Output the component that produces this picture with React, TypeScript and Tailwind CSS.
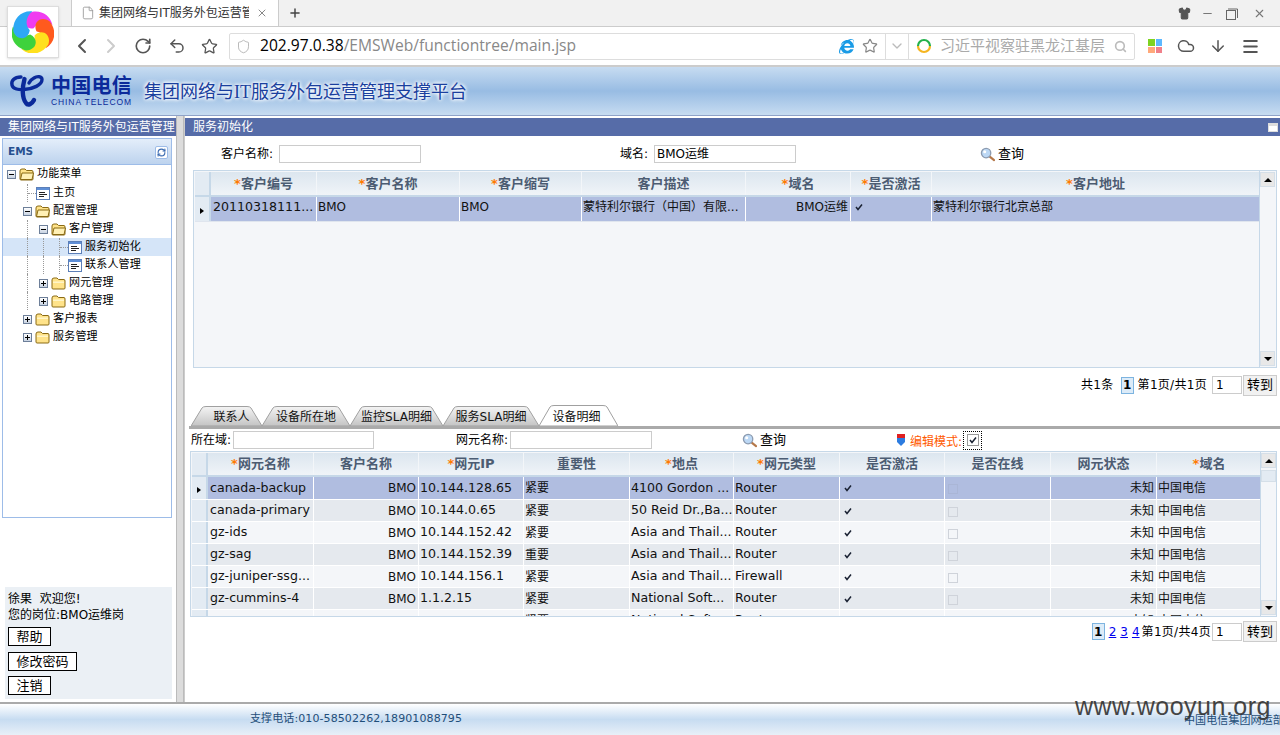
import type { ReactNode } from "react";
import { ArrowDown, ChevronDown, ChevronLeft, ChevronRight, Cloud, File, Menu, Minus, Plus, RefreshCw, RotateCw, Search, Shield, Shirt, Star, Undo2, X } from "lucide-react";
import { FaInternetExplorer } from "react-icons/fa";

const T1_COLS = [106, 143, 122, 164, 105, 81, 328];
const T2_COLS = [106, 105, 105, 106, 104, 106, 105, 106, 106, 105];

function Logo360() {
  const colors = ["#f03cf0", "#ff5a1e", "#ffe01e", "#3ed23c", "#2ea8f5"];
  return (
    <svg viewBox="0 0 100 100" className="h-[42px] w-[42px]">
      {colors.map((c, i) => (
        <path key={c} d="M54 42 C30 40 26 12 50 3 C78 0 100 18 99 46 C84 30 66 30 54 42Z" fill={c} transform={`rotate(${i * 72 - 15} 50 50)`} />
      ))}
      <circle cx="50" cy="50" r="7" fill="#fff" />
    </svg>
  );
}

function TelecomLogo() {
  return (
    <svg viewBox="0 0 36 34" className="h-[34px] w-[36px]" fill="none" stroke="#0b2a9a" strokeLinecap="round">
      <path d="M12 3 C5 3 2 7 3 11 C4 15 10 16 15 15.5 C24 15 33 11 33 5.5 C33 2 28 2 25 4 C23 5 21 7 20 9" strokeWidth="3.4" />
      <path d="M15.5 5 C13 14 13 24 17 29 C19 32 23 30 25 26" strokeWidth="4.4" />
    </svg>
  );
}

function QueryIcon() {
  return (
    <svg viewBox="0 0 16 16" className="h-[15px] w-[15px]">
      <path d="M10 10 L15 14" stroke="#b5784a" strokeWidth="2.4" strokeLinecap="round" />
      <circle cx="6.5" cy="6.5" r="5" fill="#bcd8f5" stroke="#8c9bb0" strokeWidth="1.4" />
      <circle cx="5" cy="5" r="1.6" fill="#fff" />
    </svg>
  );
}

function FolderIcon({ open }: { open?: boolean }) {
  return (
    <svg viewBox="0 0 15 13" className="h-[13px] w-[15px] shrink-0">
      <path d="M1 3 Q1 1 3 1 H6 L7.5 2.5 H13 Q14 2.5 14 4 V11 Q14 12 13 12 H2 Q1 12 1 11Z" fill="#ffe38a" stroke="#8a6a14" />
      {open ? <path d="M1.5 11.5 L3 5 H14.5 L13 11.5Z" fill="#fff0b5" stroke="#8a6a14" /> : <path d="M2 4.5 H13 V6 H2Z" fill="#fff5c8" />}
    </svg>
  );
}

function DocIcon() {
  return (
    <svg viewBox="0 0 14 13" className="ml-[1px] h-[13px] w-[14px] shrink-0">
      <rect x="0.5" y="0.5" width="13" height="12" fill="#fff" stroke="#5c7fb8" />
      <rect x="1" y="1" width="12" height="2" fill="#5f8fd6" />
      <path d="M3 5.5 H9 M3 7.5 H11 M3 9.5 H8" stroke="#222" />
    </svg>
  );
}

function TinyCheck({ className = "" }: { className?: string }) {
  return (
    <svg viewBox="0 0 8 8" className={`h-[8px] w-[8px] ${className}`}>
      <path d="M1 4 L3 6.5 L7 1.5" fill="none" stroke="#1a2233" strokeWidth="1.5" />
    </svg>
  );
}

function Toggle({ open }: { open: boolean }) {
  return (
    <span className="flex h-[9px] w-[9px] items-center justify-center border border-[#6d7f99] bg-gradient-to-b from-white to-[#c8d3e2]">
      <span className="relative block h-[1px] w-[5px] bg-black">
        {!open && <span className="absolute left-[2px] top-[-2px] h-[5px] w-[1px] bg-black" />}
      </span>
    </span>
  );
}

type TreeRow = {
  label: string;
  guides: boolean[];
  kind: "folder" | "leaf";
  open?: boolean;
  selected?: boolean;
};

const TREE: TreeRow[] = [
  { label: "功能菜单", guides: [], kind: "folder", open: true },
  { label: "主页", guides: [false], kind: "leaf" },
  { label: "配置管理", guides: [false], kind: "folder", open: true },
  { label: "客户管理", guides: [false, true], kind: "folder", open: true },
  { label: "服务初始化", guides: [false, true, true], kind: "leaf", selected: true },
  { label: "联系人管理", guides: [false, true, true], kind: "leaf" },
  { label: "网元管理", guides: [false, true], kind: "folder" },
  { label: "电路管理", guides: [false, true], kind: "folder" },
  { label: "客户报表", guides: [false], kind: "folder" },
  { label: "服务管理", guides: [false], kind: "folder" },
];

function Tree() {
  return (
    <div className="flex flex-col text-[11px] tracking-[0.2px] text-black">
      {TREE.map((r, i) => (
        <div key={r.label} className={`flex h-[18px] items-center ${i === 0 ? "mb-[1px]" : ""} ${r.selected ? "bg-[#d5e5f8]" : ""}`}>
          {r.guides.map((g, k) => (
            <span key={k} className="h-full w-4 shrink-0">
              {g && <span className="ml-2 block h-full border-l border-dotted border-[#999]" />}
            </span>
          ))}
          {r.kind === "folder" ? (
            <span className="flex h-full w-4 shrink-0 items-center justify-center">
              <Toggle open={!!r.open} />
            </span>
          ) : (
            <span className="ml-0 flex h-full w-4 shrink-0 items-center">
              <span className="ml-2 flex h-full items-center border-l border-dotted border-[#999]">
                <span className="block w-2 border-t border-dotted border-[#999]" />
              </span>
            </span>
          )}
          {r.kind === "folder" ? <FolderIcon open={r.open} /> : <DocIcon />}
          <span className="ml-[3px] whitespace-nowrap">{r.label}</span>
        </div>
      ))}
    </div>
  );
}

function HeadCell({ w, star, label }: { w: number; star?: boolean; label: string }) {
  return (
    <div style={{ width: w }} className="flex h-full shrink-0 items-center justify-center border-r border-[#f3f6f9] text-[13px] font-bold text-[#4c5c72]">
      {star && <span className="text-[#ff7a00]">*</span>}
      {label}
    </div>
  );
}

function BodyCell({ w, children, right, latin, className = "" }: { w: number; children?: ReactNode; right?: boolean; latin?: boolean; className?: string }) {
  return (
    <div
      style={{ width: w }}
      className={`flex h-full shrink-0 items-center overflow-hidden whitespace-nowrap border-r border-white px-[1px] leading-none text-[#111] ${latin ? "text-[12.6px]" : "text-[12px]"} ${right ? "justify-end pr-[2px]" : ""} ${className}`}
    >
      {children}
    </div>
  );
}

function Marker({ selected }: { selected?: boolean }) {
  return (
    <div className="flex h-full w-[16px] shrink-0 items-center justify-center border-r-2 border-[#c6d8e8] bg-[#e3ebf3]">
      {selected && <span className="mt-[3px] h-0 w-0 border-y-[3px] border-l-[4px] border-y-transparent border-l-black" />}
    </div>
  );
}

function ScrollBtn({ up }: { up?: boolean }) {
  return (
    <div className="flex h-[15px] w-[15px] items-center justify-center border border-[#d5dfe8] bg-[#e8e8e8]">
      <span className={`h-0 w-0 border-x-[4px] border-x-transparent ${up ? "border-b-[4px] border-b-black" : "border-t-[4px] border-t-black"}`} />
    </div>
  );
}

function TextInput({ value, w }: { value?: string; w: string }) {
  return <div className={`flex h-[18px] items-center border border-[#ccc] bg-white px-[2px] text-[12px] ${w}`}>{value}</div>;
}

function Query() {
  return (
    <span className="flex items-center gap-[3px] text-[13px]">
      <QueryIcon />
      <span>查询</span>
    </span>
  );
}

function PagerGo() {
  return (
    <>
      <div className="ml-[1px] flex h-[18px] w-[30px] items-center border border-[#ccc] bg-white px-[3px] text-[12px]">1</div>
      <div className="ml-[1px] flex h-[21px] w-[34px] items-center justify-center border border-[#ccc] bg-[#f1f1f1] text-[13px]">转到</div>
    </>
  );
}

function PageNo() {
  return <span className="flex h-[17px] w-[13px] items-center justify-center border border-[#7db4e0] bg-[#dcebf8] text-[12px] font-bold">1</span>;
}

function TabItem({ label, w, active, className = "" }: { label: string; w: number; active?: boolean; className?: string }) {
  const h = active ? 21 : 20;
  return (
    <div style={{ width: w, height: h }} className={`relative flex shrink-0 items-center justify-center text-[12px] text-[#111] ${className}`}>
      <svg viewBox={`0 0 ${w} ${h}`} preserveAspectRatio="none" className="absolute inset-0 h-full w-full">
        <defs>
          <linearGradient id="tabbg" x1="0" y1="0" x2="0" y2="1">
            <stop offset="0" stopColor="#f4f4f4" />
            <stop offset="1" stopColor="#c4c4c4" />
          </linearGradient>
        </defs>
        <path
          d={`M0 ${h} L11 2 Q12 0.5 15 0.5 H${w - 15} Q${w - 12} 0.5 ${w - 11} 2 L${w} ${h}Z`}
          fill={active ? "#fff" : "url(#tabbg)"}
          stroke="#a0a0a0"
          strokeWidth="1"
        />
      </svg>
      <span className="relative">{label}</span>
    </div>
  );
}

const T2_HEAD: [string, boolean][] = [
  ["网元名称", true], ["客户名称", false], ["网元IP", true], ["重要性", false], ["地点", true],
  ["网元类型", true], ["是否激活", false], ["是否在线", false], ["网元状态", false], ["域名", true],
];

const T2_ROWS = [
  ["canada-backup", "10.144.128.65", "紧要", "4100 Gordon ...", "Router"],
  ["canada-primary", "10.144.0.65", "紧要", "50 Reid Dr.,Ba...", "Router"],
  ["gz-ids", "10.144.152.42", "紧要", "Asia and Thail...", "Router"],
  ["gz-sag", "10.144.152.39", "重要", "Asia and Thail...", "Router"],
  ["gz-juniper-ssg...", "10.144.156.1", "紧要", "Asia and Thail...", "Firewall"],
  ["gz-cummins-4", "1.1.2.15", "紧要", "National Soft...", "Router"],
  ["", "", "紧要", "National Soft...", "Router"],
];

function DeviceTable() {
  return (
    <div className="ml-[5px] flex h-[166px] w-[1087px] border border-[#c6d8e8] bg-[#f4f6f9]">
      <div className="flex min-w-0 flex-1 flex-col overflow-hidden pl-[1px] pt-[1px]">
        <div className="flex h-[24px] shrink-0 border-b-2 border-[#c6d8e8] bg-gradient-to-b from-[#dce6ef] to-[#f0f4f8]">
          <Marker />
          {T2_HEAD.map(([label, star], i) => (
            <HeadCell key={label} w={T2_COLS[i]} star={star} label={label} />
          ))}
        </div>
        {T2_ROWS.map((r, i) => {
          const bg = i === 0 ? "bg-[#b0bde0]" : i % 2 === 1 ? "bg-[#e5e9ee]" : "bg-[#f4f6f9]";
          return (
            <div key={i} className={`flex shrink-0 border-b border-white ${i === 0 ? "h-[23px]" : "h-[22px]"} ${bg}`}>
              <Marker selected={i === 0} />
              <BodyCell w={T2_COLS[0]} latin className="pl-[2px]">
                {r[0] || <span className="-mt-[10px] ml-[60px]">...</span>}
              </BodyCell>
              <BodyCell w={T2_COLS[1]} right>BMO</BodyCell>
              <BodyCell w={T2_COLS[2]} latin>{r[1]}</BodyCell>
              <BodyCell w={T2_COLS[3]}>{r[2]}</BodyCell>
              <BodyCell w={T2_COLS[4]} latin>{r[3]}</BodyCell>
              <BodyCell w={T2_COLS[5]} latin>{r[4]}</BodyCell>
              <BodyCell w={T2_COLS[6]}><TinyCheck className="ml-[3px]" /></BodyCell>
              <BodyCell w={T2_COLS[7]}>
                <span className={`ml-[2px] mt-[2px] block h-[10px] w-[10px] border ${i === 0 ? "border-[#aab6d6]" : "border-[#cfd3da]"}`} />
              </BodyCell>
              <BodyCell w={T2_COLS[8]} right>未知</BodyCell>
              <BodyCell w={T2_COLS[9]}>中国电信</BodyCell>
            </div>
          );
        })}
      </div>
      <div className="flex w-[16px] shrink-0 flex-col justify-between border-l border-[#c6d8e8] bg-[#f4f6f9] py-[1px]">
        <div className="flex flex-col gap-[2px]">
          <ScrollBtn up />
          <div className="h-[12px] w-[15px] border border-[#d5dfe8] bg-[#e3ebf3]" />
        </div>
        <ScrollBtn />
      </div>
    </div>
  );
}

function CustomerTable() {
  const head: [string, boolean][] = [
    ["客户编号", true], ["客户名称", true], ["客户缩写", true], ["客户描述", false],
    ["域名", true], ["是否激活", true], ["客户地址", true],
  ];
  return (
    <div className="ml-[7px] flex h-[198px] w-[1084px] border border-[#c6d8e8] bg-[#f4f6f9]">
      <div className="flex min-w-0 flex-1 flex-col overflow-hidden pl-[1px] pt-[1px]">
        <div className="flex h-[25px] shrink-0 border-b-2 border-[#c6d8e8] bg-gradient-to-b from-[#dce6ef] to-[#f0f4f8]">
          <Marker />
          {head.map(([label, star], i) => (
            <HeadCell key={label} w={T1_COLS[i]} star={star} label={label} />
          ))}
        </div>
        <div className="flex h-[25px] shrink-0 border-b border-[#dfe5ee] bg-[#b0bde0]">
          <Marker selected />
          <BodyCell w={T1_COLS[0]} latin className="pb-[4px] pl-[2px]">20110318111...</BodyCell>
          <BodyCell w={T1_COLS[1]} className="pb-[4px]">BMO</BodyCell>
          <BodyCell w={T1_COLS[2]} className="pb-[4px]">BMO</BodyCell>
          <BodyCell w={T1_COLS[3]} className="pb-[4px]">蒙特利尔银行（中国）有限...</BodyCell>
          <BodyCell w={T1_COLS[4]} right className="pb-[4px]">BMO运维</BodyCell>
          <BodyCell w={T1_COLS[5]} className="pb-[4px]"><TinyCheck className="ml-[3px]" /></BodyCell>
          <BodyCell w={T1_COLS[6]} className="pb-[4px]">蒙特利尔银行北京总部</BodyCell>
        </div>
      </div>
      <div className="flex w-[17px] shrink-0 flex-col justify-between border-l border-[#c6d8e8] py-[1px]">
        <ScrollBtn up />
        <ScrollBtn />
      </div>
    </div>
  );
}

function BrowserChrome() {
  return (
    <>
      <div className="flex h-[27px] shrink-0 items-end border-b border-[#ccc] bg-[#f1f1f1] pl-[71px]">
        <div className="flex h-[27px] w-[208px] items-center border-x border-[#ccc] bg-white pl-[9px] text-[12px] text-[#333]">
          <File size={14} className="text-[#999]" strokeWidth={1.5} />
          <span className="ml-[4px] w-[150px] overflow-hidden whitespace-nowrap">集团网络与IT服务外包运营管理</span>
          <X size={12} className="ml-[7px] text-[#888]" />
        </div>
        <Plus size={14} className="mb-[6px] ml-[9px] text-[#444]" strokeWidth={2.5} />
        <div className="mb-[6px] ml-auto flex items-center pr-[14px] text-[#777]">
          <Shirt size={13} fill="#555" className="mr-[10px] text-[#555]" />
          <Minus size={13} className="mr-[12px]" />
          <svg viewBox="0 0 12 12" className="mr-[15px] h-[12px] w-[12px]" fill="none" stroke="#666">
            <rect x="0.5" y="2.5" width="9" height="9" />
            <path d="M2 1 H11.5 V10" />
          </svg>
          <X size={13} />
        </div>
      </div>
      <div className="flex h-[40px] shrink-0 items-center border-b-2 border-[#ccc] bg-white pl-[70px] text-[#555]">
        <ChevronLeft size={24} strokeWidth={2} />
        <ChevronRight size={24} strokeWidth={2} className="ml-[5px] text-[#ccc]" />
        <RotateCw size={18} strokeWidth={2.2} className="ml-[11px]" />
        <Undo2 size={18} strokeWidth={2} className="ml-[16px]" />
        <Star size={17} strokeWidth={1.8} className="ml-[15px]" />
        <div className="ml-[11px] flex h-[27px] w-[906px] items-center rounded-[2px] border border-[#ddd] bg-white">
          <Shield size={15} strokeWidth={1.3} className="ml-[6px] text-[#aaa]" />
          <span className="ml-[9px] whitespace-nowrap font-['Open_Sans',sans-serif] text-[15.6px] text-[#888]">
            <span className="text-black">202.97.0.38</span>/EMSWeb/functiontree/main.jsp
          </span>
          <FaInternetExplorer size={15} className="ml-auto text-[#1a9be6]" />
          <Star size={16} strokeWidth={1.8} className="ml-[8px] text-[#888]" />
          <div className="ml-[7px] flex h-full w-[24px] items-center justify-center border-x border-[#ddd]">
            <ChevronDown size={16} className="text-[#bbb]" />
          </div>
          <svg viewBox="0 0 16 16" className="ml-[7px] h-[16px] w-[16px]" fill="none" strokeWidth="2.2">
            <path d="M2 8 A6 6 0 0 1 14 8" stroke="#22b14c" />
            <path d="M2 8 A6 6 0 0 0 14 8" stroke="#f5b520" />
          </svg>
          <span className="ml-[8px] w-[166px] overflow-hidden whitespace-nowrap text-[15px] text-[#aaa]">习近平视察驻黑龙江基层</span>
          <Search size={13} strokeWidth={3} className="ml-[8px] mr-[7px] text-[#bbb]" />
        </div>
        <div className="ml-[13px] grid h-[14px] w-[14px] grid-cols-2 gap-[1px]">
          <span className="bg-[#7ed321]" />
          <span className="bg-[#5cb8ff]" />
          <span className="bg-[#ffa97a]" />
          <span className="bg-[#f0808a]" />
        </div>
        <Cloud size={18} strokeWidth={2} className="ml-[15px]" />
        <ArrowDown size={18} strokeWidth={2} className="ml-[14px]" />
        <Menu size={19} strokeWidth={2.4} className="ml-[14px]" />
      </div>
    </>
  );
}

function Banner() {
  return (
    <div className="flex h-[49px] shrink-0 items-center border-b border-[#8fa3c9] bg-gradient-to-b from-[#c7dcf1] via-[#98bce3] to-[#c7dcf1] pl-[9px]">
      <TelecomLogo />
      <div className="ml-[6px] flex w-[81px] flex-col items-center">
        <span className="text-[20px] font-bold leading-[22px] tracking-[0.2px] text-[#0b2a9a]">中国电信</span>
        <span className="whitespace-nowrap font-['Liberation_Sans',sans-serif] text-[8.5px] leading-[10px] tracking-[0.9px] text-[#0b2a9a]">CHINA TELECOM</span>
      </div>
      <span className="ml-[12px] mt-[3px] whitespace-nowrap font-['Liberation_Serif','Noto_Sans_CJK_SC',serif] text-[18px] text-[#1a3f9e] [text-shadow:0_0_4px_#fff,0_0_4px_#fff,0_0_3px_#fff]">
        集团网络与IT服务外包运营管理支撑平台
      </span>
    </div>
  );
}

function LeftColumn() {
  return (
    <div className="flex w-[177px] shrink-0 flex-col border-r border-[#bbb] bg-white pt-[2px]">
      <div className="flex h-[18px] items-center whitespace-nowrap bg-[#566ca8] pl-[8px] text-[12px] text-white">集团网络与IT服务外包运营管理</div>
      <div className="ml-[2px] mt-[2px] h-[380px] w-[170px] border border-[#9dbce8]">
        <div className="flex h-[26px] items-center justify-between border-b border-[#9dbce8] bg-gradient-to-b from-[#e4eefa] to-[#bdd3ee] pl-[5px] pr-[3px] pt-[1px] text-[10.5px] font-bold text-[#26508f]">
          EMS
          <span className="flex h-[13px] w-[13px] items-center justify-center rounded-[2px] border border-[#9dbce8] bg-white">
            <RefreshCw size={9} className="text-[#3a6ab0]" strokeWidth={3} />
          </span>
        </div>
        <Tree />
      </div>
      <div className="ml-[5px] mt-[69px] flex h-[112px] w-[167px] flex-col bg-[#ebf0f5] pl-[3px] pt-[4px] text-[12px] leading-[16px] text-black">
        <span>徐果&nbsp;&nbsp;欢迎您!</span>
        <span>您的岗位:BMO运维岗</span>
        <div className="mt-[4px] flex h-[19px] w-[43px] items-center justify-center border border-black bg-white text-[13px]">帮助</div>
        <div className="mt-[6px] flex h-[19px] w-[69px] items-center justify-center border border-black bg-white text-[13px]">修改密码</div>
        <div className="mt-[5px] flex h-[19px] w-[43px] items-center justify-center border border-black bg-white text-[13px]">注销</div>
      </div>
    </div>
  );
}

function RightColumn() {
  return (
    <div className="flex min-w-0 flex-1 flex-col border-l border-[#ccc] bg-white pt-[2px] text-[12px] text-black">
      <div className="flex h-[18px] shrink-0 items-center justify-between bg-[#566ca8] pl-[8px] pr-[2px] text-white">
        服务初始化
        <span className="h-[9px] w-[10px] border border-[#ddd] border-t-[3px] bg-white" />
      </div>
      <div className="flex h-[34px] shrink-0 items-center pt-[2px]">
        <span className="ml-[36px] w-[58px]">客户名称:</span>
        <TextInput w="w-[142px]" />
        <span className="ml-[199px] w-[34px]">域名:</span>
        <TextInput w="w-[142px]" value="BMO运维" />
        <span className="ml-[184px]"><Query /></span>
      </div>
      <div className="pl-[1px]"><CustomerTable /></div>
      <div className="mt-[6px] flex h-[22px] shrink-0 items-center justify-end pr-[3px]">
        <span className="mr-[7px] tracking-[0.3px]">共1条</span>
        <PageNo />
        <span className="ml-[4px] mr-[4px] tracking-[0.3px]">第1页/共1页</span>
        <PagerGo />
      </div>
      <div className="mt-[9px] flex h-[21px] shrink-0 items-end pl-[6px]">
        <TabItem label="联系人" w={71} className="pl-[10px] pt-[2px]" />
        <TabItem label="设备所在地" w={88} className="pt-[2px]" />
        <TabItem label="监控SLA明细" w={93} className="pt-[2px]" />
        <TabItem label="服务SLA明细" w={96} className="pt-[2px]" />
        <TabItem label="设备明细" w={79} className="pr-[4px] pt-[3px]" active />
      </div>
      <div className="ml-[4px] h-[3px] shrink-0 bg-[#aaa]" />
      <div className="flex h-[22px] shrink-0 items-center">
        <span className="ml-[6px] w-[42px]">所在域:</span>
        <TextInput w="w-[141px]" />
        <span className="ml-[82px] w-[54px]">网元名称:</span>
        <TextInput w="w-[142px]" />
        <span className="ml-[90px]"><Query /></span>
        <svg viewBox="0 0 8 12" className="ml-[111px] h-[12px] w-[8px]">
          <path d="M0 0 H8 V4 H0Z" fill="#e02020" />
          <path d="M0 4 H8 V8 L4 12 L0 8Z" fill="#2c7ce0" />
        </svg>
        <span className="ml-[5px] mt-[3px] whitespace-nowrap text-[#ff5a00]">编辑模式:</span>
        <span className="ml-[1px] flex h-[19px] w-[19px] items-center justify-center border border-dotted border-black">
          <span className="flex h-[12px] w-[12px] items-center justify-center border border-[#999] bg-white">
            <TinyCheck />
          </span>
        </span>
      </div>
      <DeviceTable />
      <div className="mt-[4px] flex h-[21px] shrink-0 items-center justify-end pr-[3px]">
        <PageNo />
        <span className="ml-[4px] text-[#00e] underline">2</span>
        <span className="ml-[4px] text-[#00e] underline">3</span>
        <span className="ml-[4px] text-[#00e] underline">4</span>
        <span className="ml-[2px] tracking-[0.3px]">第1页/共4页</span>
        <PagerGo />
      </div>
    </div>
  );
}

export default function App() {
  return (
    <div className="relative flex h-[735px] w-[1280px] flex-col overflow-hidden bg-white font-['DejaVu_Sans','Noto_Sans_CJK_SC',sans-serif]">
      <BrowserChrome />
      <div className="absolute left-[7px] top-[6px] flex h-[52px] w-[52px] items-center justify-center border border-[#ddd] bg-white shadow-sm">
        <Logo360 />
      </div>
      <Banner />
      <div className="flex min-h-0 flex-1">
        <LeftColumn />
        <div className="w-[7px] shrink-0 border-r border-[#bbb] bg-[#dcdcdc]" />
        <RightColumn />
      </div>
      <div className="flex h-[33px] shrink-0 items-center justify-between border-t-2 border-[#aaa] bg-gradient-to-b from-white via-[#c7dcf1] to-[#e8f0f8] pl-[250px] text-[11px] tracking-[0.1px] text-[#1f4e79]">
        <span>支撑电话:010-58502262,18901088795</span>
        <span className="mt-[4px] w-[96px] overflow-hidden whitespace-nowrap">中国电信集团网运部</span>
      </div>
      <span className="absolute left-[1075px] top-[691px] font-['Liberation_Sans',sans-serif] text-[25px] leading-[30px] tracking-[0.5px] text-[#333] opacity-90">www.wooyun.org</span>
    </div>
  );
}
